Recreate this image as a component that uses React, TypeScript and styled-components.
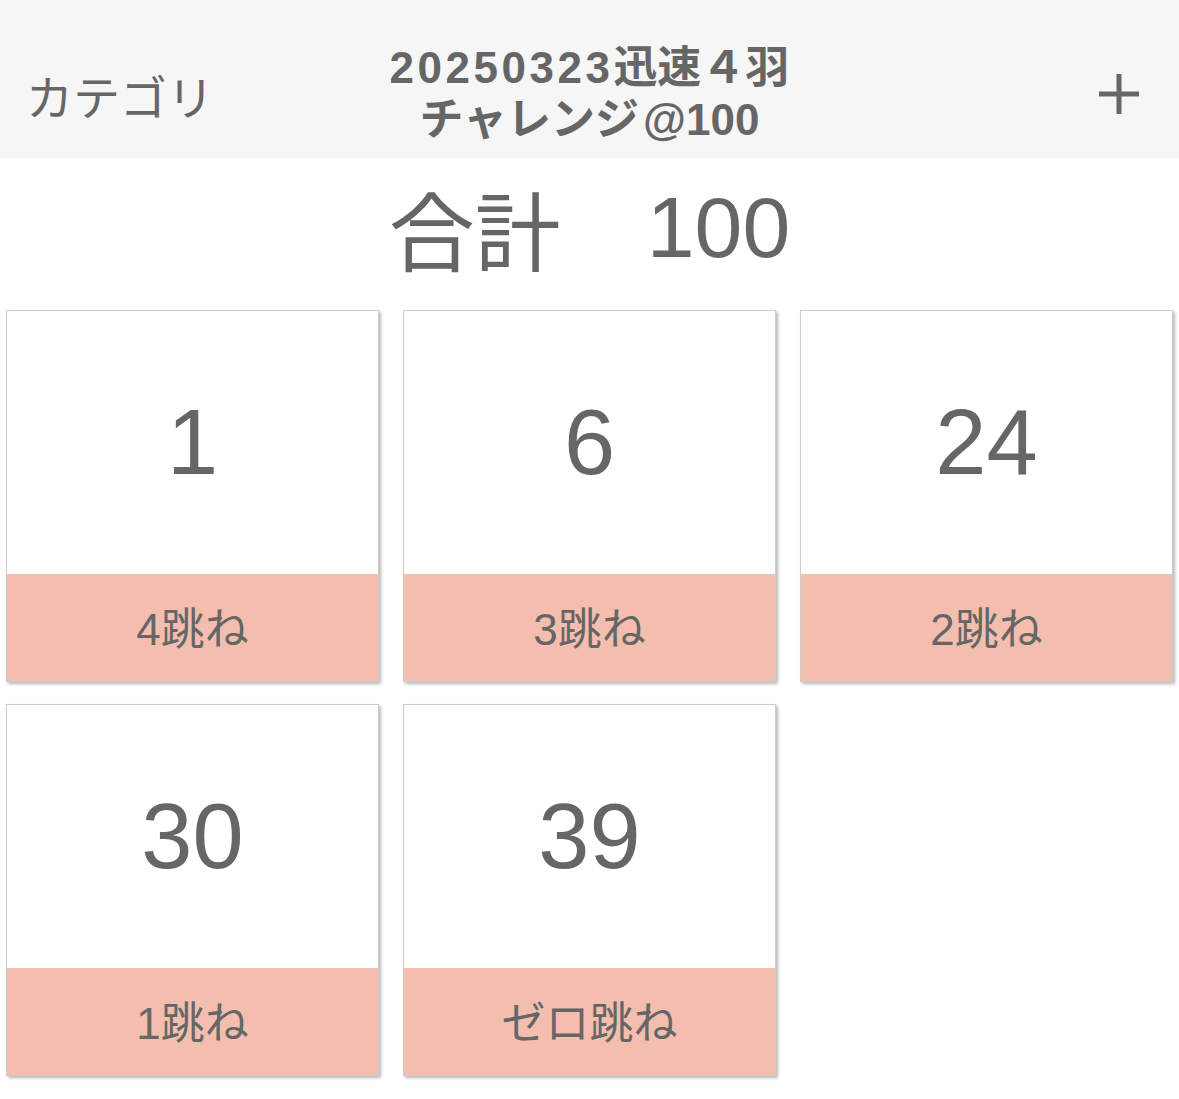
import React from "react";
import styled, { createGlobalStyle } from "styled-components";

const Global = createGlobalStyle`
  html, body { margin: 0; padding: 0; background: #ffffff; }
  body { font-family: "Liberation Sans", "Noto Sans CJK JP", sans-serif; color: #666666; }
`;

const Page = styled.div`
  width: 1179px;
  min-height: 1099px;
  background: #ffffff;
`;

const Header = styled.header`
  height: 158px;
  box-sizing: border-box;
  padding-top: 30px;
  background: #f6f6f6;
  display: grid;
  grid-template-columns: 1fr auto 1fr;
  align-items: center;
`;

const CategoryButton = styled.div`
  padding-left: 26px;
  font-size: 47px;
  color: #666666;
  font-family: "Noto Sans CJK JP", sans-serif;
  font-weight: 400;
  line-height: 1;
`;

const Title = styled.div`
  text-align: center;
  font-weight: 700;
  font-size: 44px;
  line-height: 52px;
  color: #666666;
`;

const Digits = styled.span`
  letter-spacing: 3.5px;
`;

const At = styled.span`
  margin-left: 4px;
`;

const PlusButton = styled.div`
  justify-self: end;
  padding-right: 38px;
  display: flex;
  align-items: center;
`;

const TotalRow = styled.div`
  height: 152px;
  display: flex;
  align-items: center;
  justify-content: center;
  font-size: 86px;
  color: #666666;
  gap: 86px;
  padding-bottom: 14px;
  box-sizing: border-box;
`;

const TotalLabel = styled.span`
  font-family: "Noto Sans CJK JP", sans-serif;
  font-weight: 400;
`;

const TotalValue = styled.span``;

const Grid = styled.div`
  display: grid;
  grid-template-columns: repeat(3, 373px);
  column-gap: 24px;
  row-gap: 22px;
  padding: 0 6px;
`;

const Card = styled.div`
  height: 372px;
  box-sizing: border-box;
  border: 1px solid #cccccc;
  background: #ffffff;
  box-shadow: 2px 2px 3px rgba(0, 0, 0, 0.28);
  display: flex;
  flex-direction: column;
`;

const Count = styled.div`
  flex: 1;
  display: flex;
  align-items: center;
  justify-content: center;
  font-size: 92px;
  color: #666666;
`;

const Label = styled.div`
  height: 107px;
  background: #f3beae;
  display: flex;
  align-items: center;
  justify-content: center;
  font-size: 44px;
  color: #666666;
  padding-bottom: 4px;
  box-sizing: border-box;
`;

const items = [
  { count: 1, label: "4跳ね" },
  { count: 6, label: "3跳ね" },
  { count: 24, label: "2跳ね" },
  { count: 30, label: "1跳ね" },
  { count: 39, label: "ゼロ跳ね" },
];

export default function App() {
  return (
    <Page>
      <Global />
      <Header>
        <CategoryButton>カテゴリ</CategoryButton>
        <Title>
          <Digits>20250323</Digits>迅速４羽
          <br />
          チャレンジ<At>@100</At>
        </Title>
        <PlusButton>
          <svg width="44" height="44" viewBox="0 0 44 44">
            <path d="M22 2V42M2 22H42" stroke="#666666" strokeWidth="5" fill="none" />
          </svg>
        </PlusButton>
      </Header>
      <TotalRow>
        <TotalLabel>合計</TotalLabel>
        <TotalValue>100</TotalValue>
      </TotalRow>
      <Grid>
        {items.map((it) => (
          <Card key={it.label}>
            <Count>{it.count}</Count>
            <Label>{it.label}</Label>
          </Card>
        ))}
      </Grid>
    </Page>
  );
}
